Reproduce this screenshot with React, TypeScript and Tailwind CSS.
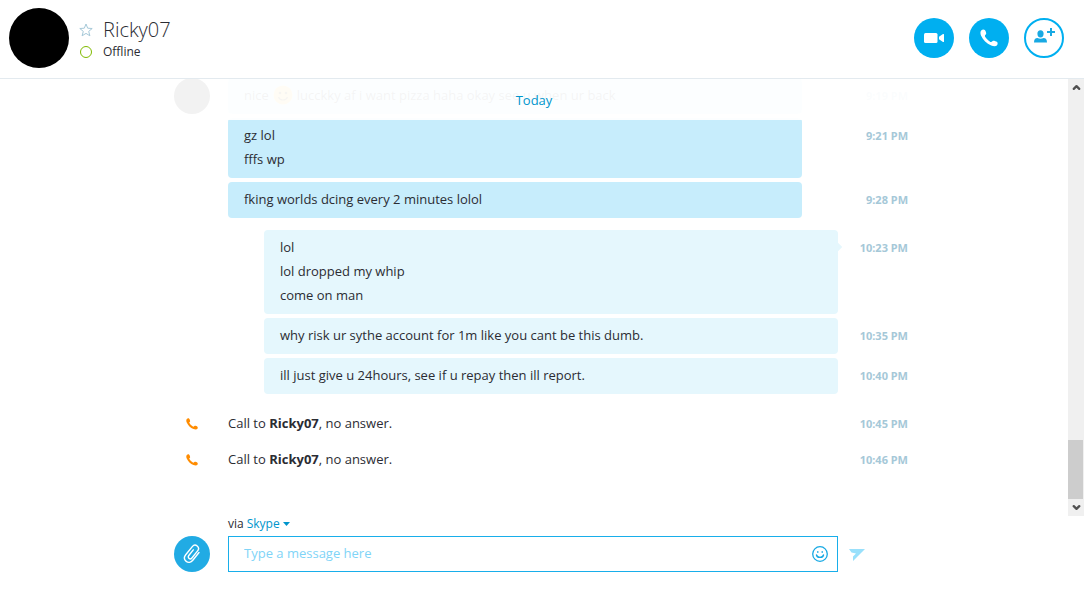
import React, { useState } from 'react';
import { ChevronDown, ChevronUp } from 'lucide-react';

type Message = {
  lines: React.ReactNode[];
  time: string;
};

const incoming: Message[] = [
  { lines: ['gz lol', 'fffs wp'], time: '9:21 PM' },
  { lines: ['fking worlds dcing every 2 minutes lolol'], time: '9:28 PM' },
];

const outgoing: Message[] = [
  { lines: ['lol', 'lol dropped my whip', 'come on man'], time: '10:23 PM' },
  { lines: ['why risk ur sythe account for 1m like you cant be this dumb.'], time: '10:35 PM' },
  { lines: ['ill just give u 24hours, see if u repay then ill report.'], time: '10:40 PM' },
];

const calls = ['10:45 PM', '10:46 PM'];

function PhoneIcon({ className }: { className: string }) {
  return (
    <svg viewBox="0 0 18 18" className={className} fill="currentColor" aria-hidden="true">
      <path d="M1.2 1.4C2.2.5 4 .2 4.8 1.1c.8 1 1.5 2.7 1.4 3.7-.1.9-1.3 1.3-1.3 2.1 0 1.5 4.7 6.100 6.200 6.100.8 0 1.200-1.200 2.100-1.300 1-.1 3 .5 3.900 1.300.9.900.6 2.600-.3 3.500-1 1-3.500.8-5.600 0C6.600 14.800 3 11.100 1.100 6.800.2 4.700.2 2.400 1.200 1.400z" />
    </svg>
  );
}

function VideoIcon() {
  return (
    <svg viewBox="0 0 20 10" className="h-[10px] w-5" fill="currentColor" aria-hidden="true">
      <rect x="0" y="0" width="13.5" height="10" rx="1.5" />
      <path d="M15 3.7 19 1.1c.6-.4 1-.1 1 .4v7c0 .5-.4.8-1 .4l-4-2.6z" />
    </svg>
  );
}

function AddPersonIcon() {
  return (
    <svg viewBox="0 0 22 16" className="h-4 w-[22px]" fill="currentColor" aria-hidden="true">
      <ellipse cx="6.5" cy="5.8" rx="3.1" ry="3.6" />
      <path d="M0 14.500c0-3.200 1.300-4.300 3.500-4.500 1.800 1 4.200 1 6 0 2.200.2 3.500 1.300 3.500 4.500z" />
      <path d="M16 0h2v3h3v2h-3v3h-2V5h-3V3h3z" />
    </svg>
  );
}

function PaperclipIcon() {
  return (
    <svg viewBox="0 0 18 20" className="h-5 w-[18px]" fill="none" stroke="currentColor" strokeWidth="1.4" strokeLinecap="round" aria-hidden="true">
      <path d="M16 8.500 9.800 16.300c-1.900 2.400-4.600 2.700-6.600 1.100s-2.400-4.200-.5-6.600l6.600-8.200c1.300-1.600 3.300-1.900 4.900-.6s1.700 3.300.4 4.900l-5.700 7.100c-.8 1-2 1.100-2.900.4s-1-1.900-.2-2.900l4.500-5.600" />
    </svg>
  );
}

function SmileIcon() {
  return (
    <svg viewBox="0 0 16 16" className="size-4" fill="none" stroke="currentColor" aria-hidden="true">
      <circle cx="8" cy="8" r="7.3" strokeWidth="1.3" />
      <path d="M4.500 9c.6 3.200 6.400 3.200 7 0" strokeWidth="1.4" strokeLinecap="round" />
      <path d="M5 5.200h1.500v1.600H5zM9.500 5.200H11v1.600H9.500z" fill="currentColor" stroke="none" />
    </svg>
  );
}

function SmileEmoji() {
  return (
    <svg viewBox="0 0 20 20" className="size-5" role="img" aria-label="smile">
      <circle cx="10" cy="10" r="9.500" fill="#ffc83d" />
      <circle cx="7" cy="8" r="1.300" fill="#5a3a10" />
      <circle cx="13" cy="8" r="1.300" fill="#5a3a10" />
      <path d="M5.500 12c1.500 4 7.500 4 9 0" fill="none" stroke="#5a3a10" strokeWidth="1.2" />
    </svg>
  );
}

function Row({ side, time, children }: { side?: React.ReactNode; time: string; children: React.ReactNode }) {
  return (
    <li className="flex">
      <div className="w-[54px] shrink-0">{side}</div>
      <div className="min-w-0 flex-1">{children}</div>
      <time className="w-[70px] shrink-0 pt-1.5 text-right font-['Noto_Sans',sans-serif] text-[11px] leading-6 font-bold text-[#a5c8d8]">{time}</time>
    </li>
  );
}

function Lines({ lines }: { lines: React.ReactNode[] }) {
  return (
    <>
      {lines.map((line, i) => (
        <p key={i}>{line}</p>
      ))}
    </>
  );
}

export default function App() {
  const [draft, setDraft] = useState('');

  return (
    <div className="flex h-screen flex-col bg-white font-['Open_Sans',sans-serif] text-[13px] leading-6 text-[#2b2c33]">
      <header className="flex shrink-0 items-center border-b border-[#e3eaef] pt-2 pr-5 pb-2.5 pl-[9px]">
        <div className="size-[60px] rounded-full bg-black" />
        <div className="ml-2.5 grid grid-cols-[14px_auto] items-center gap-x-2.5 pt-1">
          <button type="button" aria-label="Add to favourites" className="text-[#a5c8d8]">
            <svg viewBox="0 0 14 14" className="size-3.5" fill="none" stroke="currentColor" aria-hidden="true">
              <path d="m7 1 1.700 4.200 4.500.3-3.500 2.900 1.200 4.400L7 10.400l-3.900 2.400 1.200-4.400L.8 5.500l4.500-.3z" />
            </svg>
          </button>
          <h1 className="text-[20px] leading-6 font-light">Ricky07</h1>
          <span className="mx-px size-3 rounded-full border border-[#7fba00]" />
          <span className="text-[12px] leading-5">Offline</span>
        </div>
        <div className="ml-auto flex gap-[15px]">
          <button type="button" aria-label="Video call" className="flex size-10 items-center justify-center rounded-full bg-[#00aff0] text-white">
            <VideoIcon />
          </button>
          <button type="button" aria-label="Call" className="flex size-10 items-center justify-center rounded-full bg-[#00aff0] text-white">
            <PhoneIcon className="size-[18px]" />
          </button>
          <button type="button" aria-label="Add people" className="flex size-10 items-center justify-center rounded-full border-2 border-[#00aff0] pb-1 pl-px text-[#18a9e3]">
            <AddPersonIcon />
          </button>
        </div>
      </header>

      <main className="flex min-h-0 flex-1">
        <div className="relative min-w-0 flex-1 overflow-hidden pr-40 pl-[174px]">
          <ul className="-mt-px flex flex-col gap-1">
            <Row side={<div className="size-9 rounded-full bg-black" />} time="9:19 PM">
              <div className="mr-9 rounded bg-[#c7edfc] px-4 pt-[5px] pb-[7px]">
                <p className="flex items-center gap-1 whitespace-nowrap">
                  nice <SmileEmoji /> lucckky af i want pizza haha okay see u when ur back
                </p>
              </div>
            </Row>
            {incoming.map((m) => (
              <Row key={m.time} time={m.time}>
                <div className="mr-9 rounded bg-[#c7edfc] px-4 pt-[5px] pb-[7px]">
                  <Lines lines={m.lines} />
                </div>
              </Row>
            ))}
          </ul>
          <ul className="mt-3 flex flex-col gap-1">
            {outgoing.map((m, i) => (
              <Row key={m.time} time={m.time}>
                <div className="relative ml-9 rounded bg-[#e5f7fd] px-4 pt-[5px] pb-[7px]">
                  <Lines lines={m.lines} />
                  {i === 0 && <span className="absolute top-3.5 -right-[3px] size-1.5 rotate-45 bg-[#e5f7fd]" />}
                </div>
              </Row>
            ))}
          </ul>
          <ul className="mt-3">
            {calls.map((time) => (
              <Row key={time} side={<PhoneIcon className="mt-3 ml-3 size-3 text-[#ff8c00]" />} time={time}>
                <p className="pt-[5px] pb-[7px]">
                  Call to <strong>Ricky07</strong>, no answer.
                </p>
              </Row>
            ))}
          </ul>
          <div className="absolute inset-x-0 top-0 h-[41px] bg-white/95 pt-[9px] text-center text-[#0095cc]">
            Today
          </div>
        </div>

        <div className="flex w-4 shrink-0 flex-col items-center bg-[#f0f0f0] text-[#505050]">
          <button type="button" aria-label="Scroll up" className="flex h-[17px] items-center">
            <ChevronUp size={11} strokeWidth={5} />
          </button>
          <div className="mt-auto h-[59px] w-full border-r border-[#f0f0f0] bg-[#cdcdcd]" />
          <button type="button" aria-label="Scroll down" className="flex h-[17px] items-center">
            <ChevronDown size={11} strokeWidth={5} />
          </button>
        </div>
      </main>

      <footer className="flex shrink-0 items-end pr-44 pb-[18px] pl-[174px]">
        <button type="button" aria-label="Attach file" className="flex size-9 shrink-0 items-center justify-center rounded-full bg-[#21abe4] text-white">
          <PaperclipIcon />
        </button>
        <div className="ml-[18px] min-w-0 flex-1">
          <div className="flex h-5 items-center pb-1 text-[12px] leading-4">
            via
            <button type="button" className="ml-[3px] flex items-center gap-[3px] text-[#0095cc]">
              Skype
              <svg viewBox="0 0 7 4" className="h-1 w-[7px]" fill="currentColor" aria-hidden="true">
                <path d="M0 0h7L3.500 4z" />
              </svg>
            </button>
          </div>
          <form className="flex h-9 items-center border border-[#18aeea] pr-[9px] pl-[15px]" onSubmit={(e) => e.preventDefault()}>
            <input
              type="text"
              aria-label="Message"
              value={draft}
              onChange={(e) => setDraft(e.target.value)}
              placeholder="Type a message here"
              className="min-w-0 flex-1 pb-0.5 outline-none placeholder:text-[#7fd4f7]"
            />
            <button type="button" aria-label="Emoticons" className="text-[#18a9e3]">
              <SmileIcon />
            </button>
          </form>
        </div>
        <button type="button" aria-label="Send" className="flex h-9 w-[70px] shrink-0 items-center pt-0.5 pl-[11px] text-[#99e0fb]">
          <svg viewBox="0 0 16 12" className="h-3 w-4" fill="currentColor" aria-hidden="true">
            <path d="M0 0h16L4 12V7.500L7 4.500 2.500 3.500z" />
          </svg>
        </button>
      </footer>
    </div>
  );
}
